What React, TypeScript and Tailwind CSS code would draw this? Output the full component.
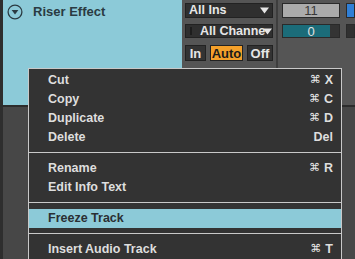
const items = [
  { label: "Cut", key: "X" },
  { label: "Copy", key: "C" },
  { label: "Duplicate", key: "D" },
  { label: "Delete", plain: "Del" },
  "sep",
  { label: "Rename", key: "R" },
  { label: "Edit Info Text" },
  "sep",
  { label: "Freeze Track", active: true },
  "sep",
  { label: "Insert Audio Track", key: "T" },
] as const;

const FoldIcon = () => (
  <svg width="16" height="16" viewBox="0 0 16 16" className="shrink-0">
    <circle cx="8" cy="8" r="6.9" fill="none" stroke="#2b3b42" strokeWidth="1.3" />
    <path d="M4.6 6.1 H11.4 L8 10.6 Z" fill="#2b3b42" />
  </svg>
);

const Caret = () => (
  <svg width="9" height="7" viewBox="0 0 9 7" className="shrink-0">
    <path d="M0 0.5 H9 L4.5 6.5 Z" fill="#e6e6e6" />
  </svg>
);

const ContextMenu = () => (
  <div className="absolute left-[28px] top-[68px] w-[314px] h-[200px] border border-[#c9c9c9] bg-[#333333] pt-[2px] font-['Liberation_Sans',Arial,sans-serif] text-[12.5px] font-bold text-[#dedede]">
    {items.map((it, i) =>
      it === "sep" ? (
        <div key={i} className="mt-[5px] mb-[6px] h-px bg-[#c9c9c9]" />
      ) : (
        <div
          key={i}
          className={
            "flex h-[19px] items-center justify-between pl-[19px] pr-[8px] " +
            ("active" in it && it.active ? "bg-[#8ccad8] text-[#2a2f33]" : "")
          }
        >
          <span>{it.label}</span>
          {"key" in it && it.key && (
            <span className="flex items-center gap-[4px]">
              <span className="font-['DejaVu_Sans',sans-serif] text-[11px] font-normal text-[#e8e8e8]">⌘</span>
              <span>{it.key}</span>
            </span>
          )}
          {"plain" in it && it.plain && <span>{it.plain}</span>}
        </div>
      )
    )}
  </div>
);

export default function App() {
  return (
    <div className="relative flex h-[259px] w-[355px] flex-col overflow-hidden bg-[#474747] font-['Liberation_Sans',Arial,sans-serif]">
      <div className="flex h-[107px] shrink-0 border-b-2 border-[#2c2c2c] bg-[#555555]">
        <div className="w-[3px] bg-[#2e2e2e]" />
        <div className="flex w-[179px] items-start gap-[10px] bg-[#8ccad8] pl-[4px] pt-[4px]">
          <FoldIcon />
          <span className="text-[13px] font-bold leading-[16px] text-[#2a3b42]">Riser Effect</span>
        </div>

        <div className="flex w-[94px] flex-col pl-[3px] pt-[3px] text-[12.5px] font-bold text-[#e6e6e6]">
          <div className="flex h-[15px] w-[88px] items-center justify-between border border-[#222] bg-[#2f2f2f] pl-[3px] pr-[3px]">
            <span className="leading-none">All Ins</span>
            <Caret />
          </div>
          <div className="mt-[6px] flex h-[14px] w-[88px] items-center border border-[#222] bg-[#2f2f2f] pl-[4px] pr-[3px]">
            <span className="h-[8px] w-[2px] shrink-0 bg-[#1d1d1d]" />
            <span className="ml-[8px] whitespace-nowrap leading-none">All Channe</span>
            <span className="-ml-[2px]">
              <Caret />
            </span>
          </div>
          <div className="mt-[7px] flex h-[16px] w-[88px] gap-[4px] text-[13px] leading-none">
            <div className="flex w-[21px] items-center justify-center border border-[#222] bg-[#333]">In</div>
            <div className="flex w-[33px] items-center justify-center border border-[#222] bg-[#f4a02a] text-[#1a1a1a]">Auto</div>
            <div className="flex w-[26px] items-center justify-center border border-[#222] bg-[#333]">Off</div>
          </div>
        </div>

        <div className="w-[2px] bg-[#3e3e3e]" />

        <div className="flex flex-1 flex-col gap-[6px] pl-[4px] pt-[3px] text-[13px] leading-none">
          <div className="flex h-[15px] gap-[6px]">
            <div className="flex w-[58px] items-center justify-center border border-[#2a2a2a] bg-[#ababab] text-[#383838]">11</div>
            <div className="flex-1 border border-[#2a2a2a] bg-[#2f7fd6]" />
          </div>
          <div className="flex h-[14px] gap-[6px]">
            <div className="relative flex w-[58px] items-center justify-center border border-[#2a2a2a] bg-[#343434] text-[#e0e0e0]">
              <div className="absolute inset-y-0 left-0 w-[47px] bg-[#1b6c79]" />
              <span className="relative">0</span>
            </div>
            <div className="flex-1 border border-[#2a2a2a] bg-[#303030]" />
          </div>
        </div>
      </div>

      <div className="flex flex-1">
        <div className="w-[3px] bg-[#2e2e2e]" />
        <div className="flex-1" />
      </div>

      <ContextMenu />
    </div>
  );
}
